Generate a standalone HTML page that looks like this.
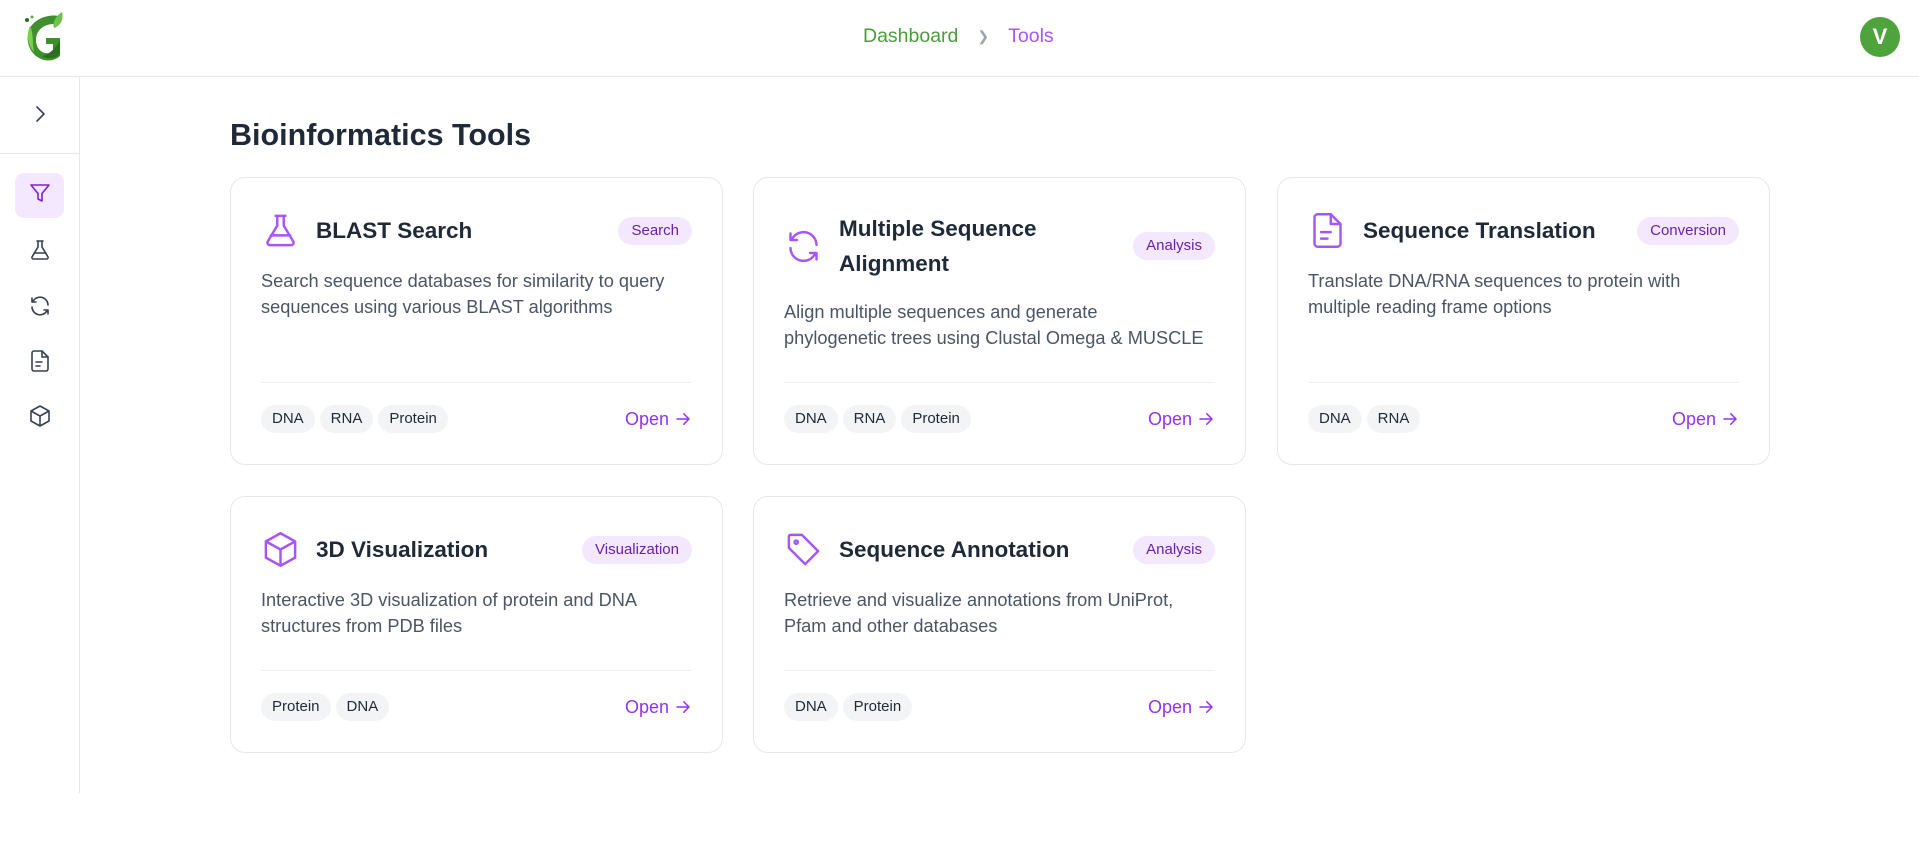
<!DOCTYPE html>
<html><head><meta charset="utf-8"><style>
*{box-sizing:border-box;margin:0;padding:0}
body{width:1919px;height:860px;background:#fff;font-family:"Liberation Sans",sans-serif;color:#1f2937;position:relative;overflow:hidden}
.hdr{position:absolute;left:0;top:0;width:1919px;height:77px;border-bottom:1px solid #e5e7eb}
.logo{position:absolute;left:22px;top:12px}
.bc{position:absolute;left:863px;top:25px;font-size:19.5px;display:flex;align-items:center}
.bc .d{color:#4b9d3b}.bc .t{color:#a855f7}.bc .s{color:#9ca3af;margin:0 19px;font-size:14px}
.av{position:absolute;left:1860px;top:17px;width:40px;height:40px;border-radius:50%;background:#4fa33d;color:#fff;font-size:22px;font-weight:bold;text-align:center;line-height:40px}
.side{position:absolute;left:0;top:77px;width:80px;height:716px;border-right:1px solid #e5e7eb}
.sep{position:absolute;left:0;top:76px;width:80px;height:1px;background:#e5e7eb}
.si{position:absolute;left:28px;width:24px;height:24px}
.act{position:absolute;left:15px;top:96px;width:49px;height:45px;border-radius:9px;background:#f3e8ff}
h1{position:absolute;left:230px;top:118px;font-size:30.5px;font-weight:bold;color:#1f2937}
.card{position:absolute;width:493px;border:1px solid #e5e7eb;border-radius:15px;padding:33px 30px 31px 30px;display:flex;flex-direction:column}
.hd{display:flex;align-items:center}
.hd svg{width:39px;height:39px;flex:none;margin-right:16px}
.ti{flex:1;font-size:22.5px;font-weight:bold;line-height:35px;color:#1f2937}
.bd{flex:none;background:#f3e8ff;color:#6b21a8;font-size:15px;padding:0 13px;height:28px;line-height:28px;border-radius:14px}
.ds{margin-top:19px;font-size:18.2px;line-height:25.7px;color:#4b5563;flex:1;white-space:nowrap}
.ft{border-top:1px solid #eef0f2;margin-top:30px;padding-top:22px;display:flex;align-items:center}
.tg{background:#f3f4f6;color:#1f2937;font-size:15px;height:28px;line-height:28px;padding:0 11px;border-radius:14px;margin-right:5px}
.op{margin-left:auto;color:#9333ea;font-size:18px;display:flex;align-items:center}
.op svg{margin-left:5px}
</style></head><body>
<div class="hdr">
<svg class="logo" width="46" height="50" viewBox="0 0 46 50">
<path d="M36 4 C28 2 12 6 7 18 C3 30 8 44 22 48 C30 50 36 46 38 44 L38 26 L24 26 L24 32 L31 32 L31 40 C22 44 14 38 14 28 C14 18 22 12 32 12 Z" fill="#3f8f2f"/>
<path d="M40 0 C34 4 30 10 32 16 C38 14 42 8 40 0Z" fill="#6cc24a"/>
<path d="M8 14 C4 22 6 34 12 40 C10 30 12 22 8 14Z" fill="#7bd04f"/>
<path d="M20 44 C26 48 34 46 38 42 L38 28 C34 36 28 42 20 44Z" fill="#2c6e20"/>
<circle cx="5" cy="8" r="2" fill="#2c6e20"/><circle cx="10" cy="5" r="1.5" fill="#4caf3a"/>
</svg>
<div class="bc"><span class="d">Dashboard</span><span class="s">&#10095;</span><span class="t">Tools</span></div>
<div class="av">V</div>
</div>
<div class="side">
<svg class="si" style="top:25px" viewBox="0 0 24 24" fill="none" stroke="#374151" stroke-width="1.6" stroke-linecap="round" stroke-linejoin="round"><path d="M9 5l7 7-7 7"/></svg>
<div class="sep"></div>
<div class="act"></div>
<svg class="si" style="top:104px" viewBox="0 0 24 24" fill="none" stroke="#7e22ce" stroke-width="1.6" stroke-linejoin="round"><path d="M3 4h18l-7 8.5V20l-4-2v-5.5z"/></svg>
<svg class="si" style="top:161px" viewBox="0 0 24 24" fill="none" stroke="#374151" stroke-width="1.6" stroke-linecap="round" stroke-linejoin="round"><path d="M9 3h6M10 3v6L4 19a1.5 1.5 0 0 0 1.3 2h13.4a1.5 1.5 0 0 0 1.3-2L14 9V3M6 15h12"/></svg>
<svg class="si" style="top:217px" viewBox="0 0 24 24" fill="none" stroke="#374151" stroke-width="1.6" stroke-linecap="round" stroke-linejoin="round"><path d="M20 11a8 8 0 0 0-14.5-4.5L4 8M4 4v4h4M4 13a8 8 0 0 0 14.5 4.5L20 16M20 20v-4h-4"/></svg>
<svg class="si" style="top:272px" viewBox="0 0 24 24" fill="none" stroke="#374151" stroke-width="1.6" stroke-linecap="round" stroke-linejoin="round"><path d="M14 2H6a2 2 0 0 0-2 2v16a2 2 0 0 0 2 2h12a2 2 0 0 0 2-2V8z"/><path d="M14 2v6h6M8 13h6M8 17h4"/></svg>
<svg class="si" style="top:327px" viewBox="0 0 24 24" fill="none" stroke="#374151" stroke-width="1.6" stroke-linejoin="round"><path d="M12 2l9 5v10l-9 5-9-5V7z"/><path d="M3 7l9 5 9-5M12 12v10"/></svg>
</div>
<h1>Bioinformatics Tools</h1>

<div class="card" style="left:230px;top:177px;height:288px">
<div class="hd"><svg viewBox="0 0 24 24" fill="none" stroke="#a855f7" stroke-width="1.5" stroke-linecap="round" stroke-linejoin="round"><path d="M9 3h6M10 3v6L4 19a1.5 1.5 0 0 0 1.3 2h13.4a1.5 1.5 0 0 0 1.3-2L14 9V3M6 15h12"/></svg><div class="ti">BLAST Search</div><div class="bd">Search</div></div>
<div class="ds">Search sequence databases for similarity to query<br>sequences using various BLAST algorithms</div>
<div class="ft"><span class="tg">DNA</span><span class="tg">RNA</span><span class="tg">Protein</span><span class="op">Open<svg width="18" height="18" viewBox="0 0 24 24" fill="none" stroke="#9333ea" stroke-width="2" stroke-linecap="round" stroke-linejoin="round"><path d="M4 12h16M13 5l7 7-7 7"/></svg></span></div>
</div>

<div class="card" style="left:753px;top:177px;height:288px">
<div class="hd"><svg viewBox="0 0 24 24" fill="none" stroke="#a855f7" stroke-width="1.5" stroke-linecap="round" stroke-linejoin="round"><path d="M20 11a8 8 0 0 0-14.5-4.5L4 8M4 4v4h4M4 13a8 8 0 0 0 14.5 4.5L20 16M20 20v-4h-4"/></svg><div class="ti">Multiple Sequence<br>Alignment</div><div class="bd">Analysis</div></div>
<div class="ds">Align multiple sequences and generate<br>phylogenetic trees using Clustal Omega &amp; MUSCLE</div>
<div class="ft"><span class="tg">DNA</span><span class="tg">RNA</span><span class="tg">Protein</span><span class="op">Open<svg width="18" height="18" viewBox="0 0 24 24" fill="none" stroke="#9333ea" stroke-width="2" stroke-linecap="round" stroke-linejoin="round"><path d="M4 12h16M13 5l7 7-7 7"/></svg></span></div>
</div>

<div class="card" style="left:1277px;top:177px;height:288px">
<div class="hd"><svg viewBox="0 0 24 24" fill="none" stroke="#a855f7" stroke-width="1.5" stroke-linecap="round" stroke-linejoin="round"><path d="M14 2H6a2 2 0 0 0-2 2v16a2 2 0 0 0 2 2h12a2 2 0 0 0 2-2V8z"/><path d="M14 2v6h6M8 13h6M8 17h4"/></svg><div class="ti">Sequence Translation</div><div class="bd">Conversion</div></div>
<div class="ds">Translate DNA/RNA sequences to protein with<br>multiple reading frame options</div>
<div class="ft"><span class="tg">DNA</span><span class="tg">RNA</span><span class="op">Open<svg width="18" height="18" viewBox="0 0 24 24" fill="none" stroke="#9333ea" stroke-width="2" stroke-linecap="round" stroke-linejoin="round"><path d="M4 12h16M13 5l7 7-7 7"/></svg></span></div>
</div>

<div class="card" style="left:230px;top:496px;height:257px">
<div class="hd"><svg viewBox="0 0 24 24" fill="none" stroke="#a855f7" stroke-width="1.5" stroke-linejoin="round"><path d="M12 2l9 5v10l-9 5-9-5V7z"/><path d="M3 7l9 5 9-5M12 12v10"/></svg><div class="ti">3D Visualization</div><div class="bd">Visualization</div></div>
<div class="ds">Interactive 3D visualization of protein and DNA<br>structures from PDB files</div>
<div class="ft"><span class="tg">Protein</span><span class="tg">DNA</span><span class="op">Open<svg width="18" height="18" viewBox="0 0 24 24" fill="none" stroke="#9333ea" stroke-width="2" stroke-linecap="round" stroke-linejoin="round"><path d="M4 12h16M13 5l7 7-7 7"/></svg></span></div>
</div>

<div class="card" style="left:753px;top:496px;height:257px">
<div class="hd"><svg viewBox="0 0 24 24" fill="none" stroke="#a855f7" stroke-width="1.5" stroke-linecap="round" stroke-linejoin="round"><path d="M3 4v7l10 10 8-8L11 3H4a1 1 0 0 0-1 1z"/><circle cx="7.5" cy="7.5" r="1"/></svg><div class="ti">Sequence Annotation</div><div class="bd">Analysis</div></div>
<div class="ds">Retrieve and visualize annotations from UniProt,<br>Pfam and other databases</div>
<div class="ft"><span class="tg">DNA</span><span class="tg">Protein</span><span class="op">Open<svg width="18" height="18" viewBox="0 0 24 24" fill="none" stroke="#9333ea" stroke-width="2" stroke-linecap="round" stroke-linejoin="round"><path d="M4 12h16M13 5l7 7-7 7"/></svg></span></div>
</div>
</body></html>
